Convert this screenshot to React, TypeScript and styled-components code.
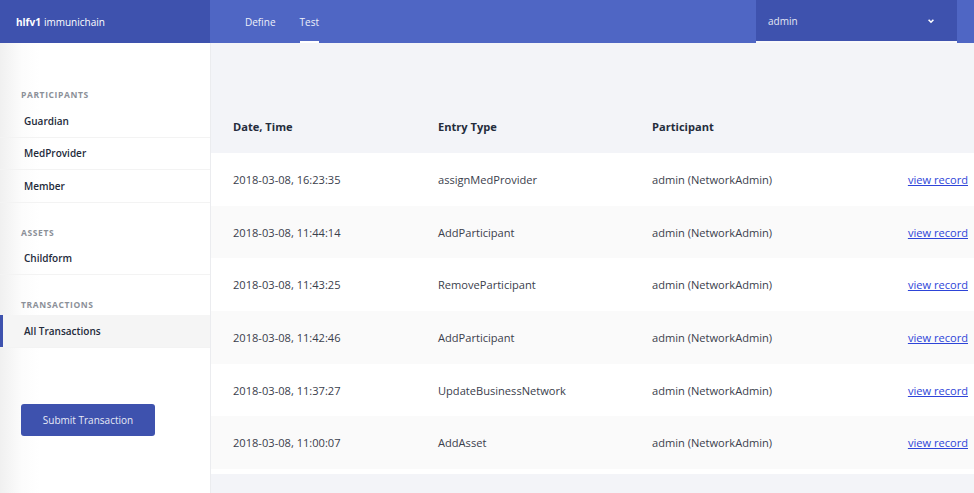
import React from "react";
import styled, { createGlobalStyle } from "styled-components";

const GlobalStyle = createGlobalStyle`
  html, body {
    margin: 0;
    padding: 0;
    height: 100%;
    overflow: hidden;
    background: #f3f4f8;
    font-family: "Open Sans", "Noto Sans", sans-serif;
    -webkit-font-smoothing: antialiased;
  }
  #root {
    height: 100%;
  }
`;

const Page = styled.div`
  display: flex;
  flex-direction: column;
  height: 493px;
  width: 974px;
  overflow: hidden;
`;

const TopBar = styled.header`
  display: flex;
  height: 43px;
  background: #4f66c4;
  flex-shrink: 0;
`;

const Brand = styled.div`
  width: 210px;
  background: #3e52ae;
  color: #fff;
  font-size: 10px;
  display: flex;
  align-items: center;
  padding-left: 16px;
  box-sizing: border-box;
  padding-top: 1px;
  b {
    font-weight: 700;
    margin-right: 3px;
  }
`;

const Tabs = styled.nav`
  display: flex;
  flex: 1;
  padding-left: 35px;
  gap: 24px;
`;

const Tab = styled.div<{ active?: boolean }>`
  position: relative;
  display: flex;
  align-items: center;
  color: #eef0fa;
  font-size: 10px;
  padding-top: 1px;
  &::after {
    content: "";
    display: ${(p) => (p.active ? "block" : "none")};
    position: absolute;
    left: 0;
    right: 0;
    bottom: 0;
    height: 2px;
    background: #fff;
  }
`;

const UserMenu = styled.div`
  width: 201px;
  margin-right: 17px;
  background: #3e52ae;
  color: #e4e7f4;
  font-size: 10px;
  display: flex;
  align-items: center;
  justify-content: space-between;
  padding: 1px 22px 0 12px;
  box-sizing: border-box;
  border-bottom: 2px solid #f8f8fa;
`;

const Body = styled.div`
  display: flex;
  flex: 1;
  min-height: 0;
`;

const Sidebar = styled.aside`
  width: 211px;
  flex-shrink: 0;
  background: linear-gradient(to right, #f0f0f0 0px, #fcfcfc 22px, #fff 40px);
  border-right: 1px solid #ebecef;
  box-sizing: border-box;
  padding-top: 46px;
  display: flex;
  flex-direction: column;
`;

const SectionTitle = styled.div`
  font-size: 8.5px;
  font-weight: 700;
  letter-spacing: 0.6px;
  color: #8b9098;
  padding-left: 21px;
  height: 12px;
  line-height: 12px;
  margin-bottom: 4px;
`;

const Section = styled.div`
  margin-bottom: 24px;
`;

const NavItem = styled.div<{ active?: boolean }>`
  height: 32.5px;
  box-sizing: border-box;
  display: flex;
  align-items: center;
  padding-left: 24px;
  font-size: 10px;
  font-weight: 600;
  color: #232a3a;
  border-bottom: 1px solid #f3f3f3;
  background: ${(p) => (p.active ? "#f5f5f5" : "transparent")};
  box-shadow: ${(p) => (p.active ? "inset 3px 0 0 #3e52ae" : "none")};
`;

const SubmitButton = styled.button`
  margin: 32px 0 0 21px;
  width: 134px;
  height: 32px;
  border: none;
  border-radius: 3px;
  background: #3e52ae;
  color: #e8eaf6;
  font-family: inherit;
  font-size: 10px;
  cursor: pointer;
`;

const Main = styled.main`
  flex: 1;
  padding-top: 57px;
  overflow: hidden;
`;

const Table = styled.div`
  padding-bottom: 5px;
  background: #fff;
`;

const Row = styled.div<{ head?: boolean; shade?: boolean }>`
  display: grid;
  grid-template-columns: 205px 214px 1fr auto;
  align-items: center;
  height: ${(p) => (p.head ? "53px" : "52.7px")};
  padding: 0 6px 0 22px;
  background: ${(p) => (p.head ? "#f3f4f8" : p.shade ? "#fafafa" : "#fff")};
  font-size: 11.1px;
  font-weight: ${(p) => (p.head ? 700 : 400)};
  color: ${(p) => (p.head ? "#252c3c" : "#3a404c")};
`;

const Cell = styled.div`
  white-space: nowrap;
`;

const LinkCell = styled.a`
  color: #2d44d8;
  text-decoration: underline;
  font-size: 11.1px;
  white-space: nowrap;
`;

const Chevron = () => (
  <svg width="8" height="8" viewBox="0 0 10 10">
    <path d="M2 3.5 L5 6.5 L8 3.5" stroke="#fff" strokeWidth="2" fill="none" />
  </svg>
);

const records = [
  ["2018-03-08, 16:23:35", "assignMedProvider"],
  ["2018-03-08, 11:44:14", "AddParticipant"],
  ["2018-03-08, 11:43:25", "RemoveParticipant"],
  ["2018-03-08, 11:42:46", "AddParticipant"],
  ["2018-03-08, 11:37:27", "UpdateBusinessNetwork"],
  ["2018-03-08, 11:00:07", "AddAsset"],
];

export default function App() {
  return (
    <Page>
      <GlobalStyle />
      <TopBar>
        <Brand>
          <b>hlfv1</b> immunichain
        </Brand>
        <Tabs>
          <Tab>Define</Tab>
          <Tab active>Test</Tab>
        </Tabs>
        <UserMenu>
          <span>admin</span>
          <Chevron />
        </UserMenu>
      </TopBar>
      <Body>
        <Sidebar>
          <Section>
            <SectionTitle>PARTICIPANTS</SectionTitle>
            <NavItem>Guardian</NavItem>
            <NavItem>MedProvider</NavItem>
            <NavItem>Member</NavItem>
          </Section>
          <Section>
            <SectionTitle>ASSETS</SectionTitle>
            <NavItem>Childform</NavItem>
          </Section>
          <Section>
            <SectionTitle>TRANSACTIONS</SectionTitle>
            <NavItem active>All Transactions</NavItem>
          </Section>
          <SubmitButton>Submit Transaction</SubmitButton>
        </Sidebar>
        <Main>
          <Table>
            <Row head>
              <Cell>Date, Time</Cell>
              <Cell>Entry Type</Cell>
              <Cell>Participant</Cell>
              <Cell />
            </Row>
            {records.map(([date, type], i) => (
              <Row key={i} shade={i % 2 === 1}>
                <Cell>{date}</Cell>
                <Cell>{type}</Cell>
                <Cell>admin (NetworkAdmin)</Cell>
                <LinkCell href="#">view record</LinkCell>
              </Row>
            ))}
          </Table>
        </Main>
      </Body>
    </Page>
  );
}
